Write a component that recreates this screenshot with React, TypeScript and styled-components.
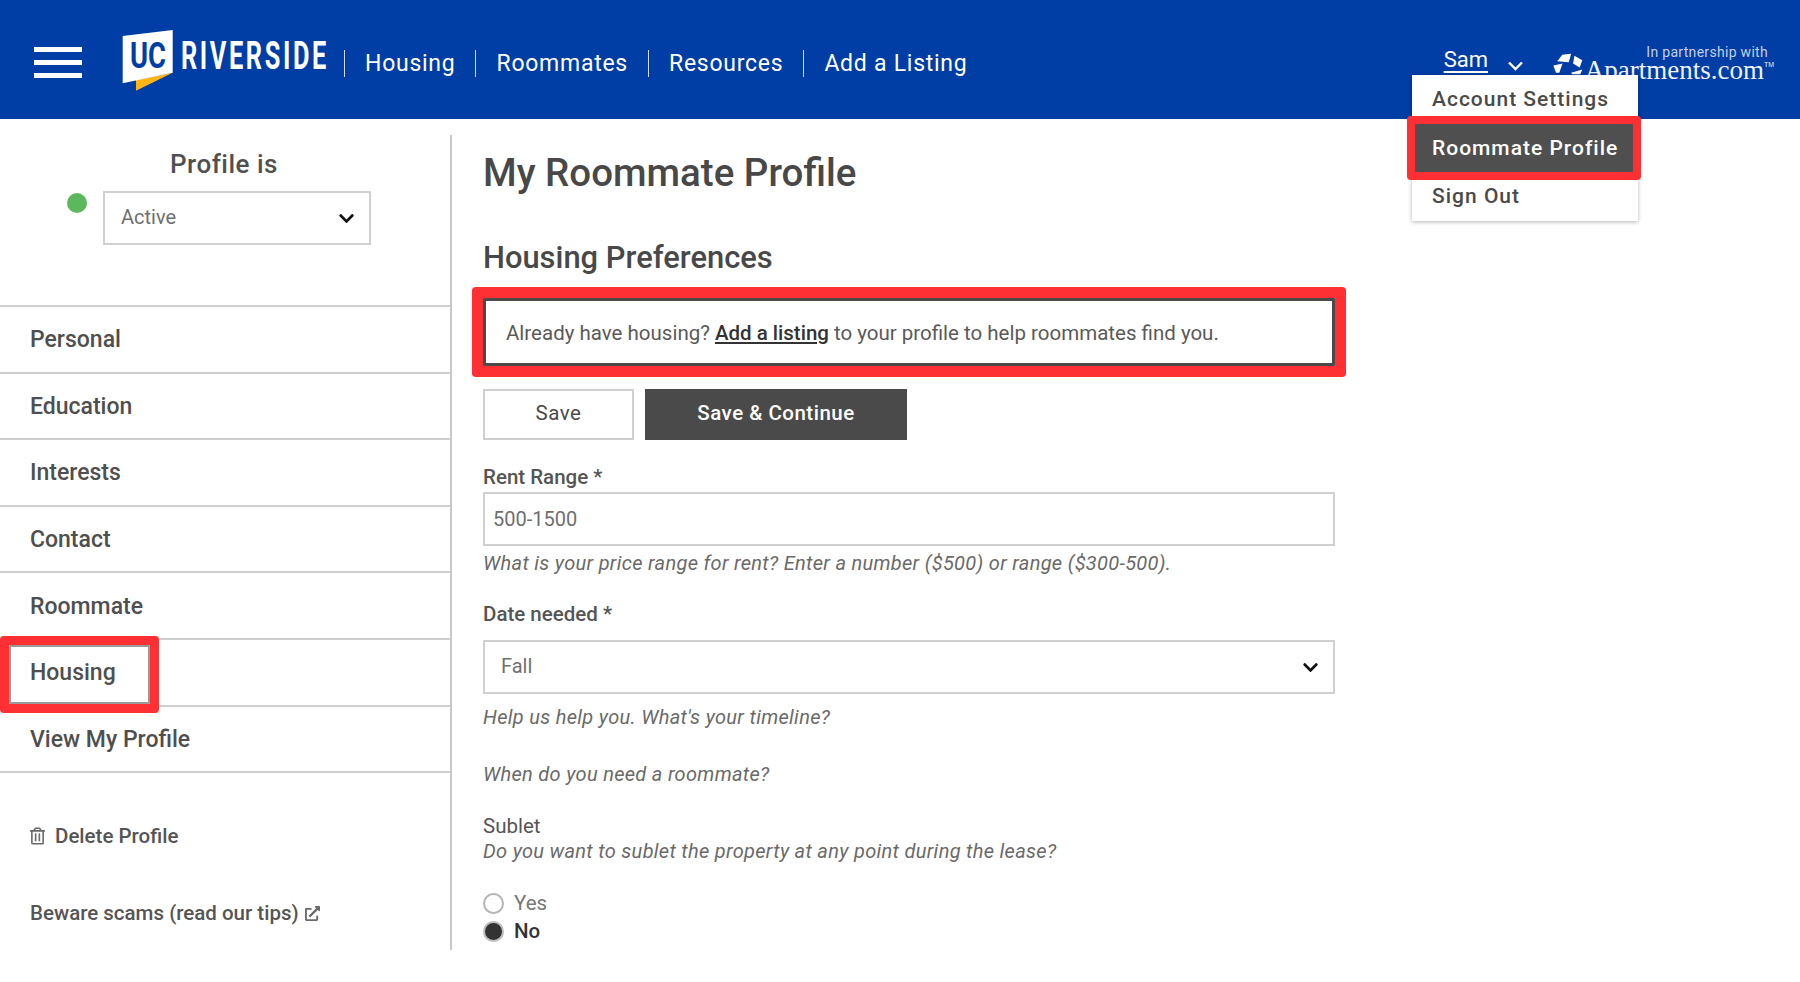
import React from "react";
import styled, { createGlobalStyle } from "styled-components";
import { FaChevronDown, FaRegTrashAlt, FaExternalLinkAlt } from "react-icons/fa";

const navLinks = ["Housing", "Roommates", "Resources", "Add a Listing"];
const sideLinks = ["Personal", "Education", "Interests", "Contact", "Roommate", "Housing", "View My Profile"];

const GlobalStyle = createGlobalStyle`
  html, body {
    margin: 0;
    padding: 0;
    background: #fff;
    font-family: Roboto, "Liberation Sans", sans-serif;
    color: #4a4a4a;
    overflow: hidden;
  }
  * { box-sizing: border-box; }
`;

const Page = styled.div`
  width: 1800px;
  height: 982px;
  overflow: hidden;
`;

const Header = styled.header`
  position: relative;
  height: 119px;
  background: #003da5;
  display: flex;
  align-items: center;
  padding-left: 34px;
  color: #fff;
`;

const Burger = styled.div`
  width: 48px;
  display: flex;
  flex-direction: column;
  gap: 8px;
  margin-top: 6px;

  span {
    height: 5px;
    background: #fff;
  }
`;

const LogoWrap = styled.div`
  width: 222px;
  height: 62px;
  margin-left: 40px;
  margin-top: 3px;
`;

const TopNav = styled.nav`
  display: flex;
  align-items: center;
  margin-top: 7px;
`;

const TopLink = styled.a`
  font-size: 23px;
  letter-spacing: 0.74px;
  line-height: 27px;
  padding: 0 20px;
  border-left: 1px solid #cfd8ea;
  color: #fff;
`;

const Account = styled.div`
  margin-left: auto;
  align-self: stretch;
  display: flex;
  align-items: flex-start;
  margin-right: 26px;
`;

const UserName = styled.a`
  font-size: 22px;
  line-height: 26px;
  text-decoration: underline;
  text-underline-offset: 4px;
  color: #fff;
  margin-top: 47px;
  margin-right: 20px;
`;

const Caret = styled.svg`
  margin-top: 61px;
  margin-right: 29px;
`;

const ApartmentsWrap = styled.div`
  margin-top: 47px;
  width: 222px;
  display: flex;
  flex-direction: column;
  align-items: flex-end;
  position: relative;
`;

const Partner = styled.div`
  font-size: 14px;
  letter-spacing: 0.3px;
  color: #c3cfe8;
  line-height: 10px;
  margin-right: 6px;
`;

const ApartmentsName = styled.div`
  font-family: "Liberation Serif", serif;
  font-size: 27px;
  line-height: 14px;
  margin-top: 6px;
  color: #eef2f9;

  sup {
    font-size: 7px;
    line-height: 0;
    vertical-align: 12px;
    font-family: "Liberation Sans", sans-serif;
  }
`;

const StarLogo = styled.svg`
  position: absolute;
  left: 0;
  top: 6px;
`;

const Menu = styled.div`
  position: absolute;
  left: 1412px;
  top: 75px;
  width: 226px;
  background: #fff;
  box-shadow: 0 1px 4px rgba(0, 0, 0, 0.3);
  z-index: 5;
`;

const MenuItem = styled.div<{ $active?: boolean }>`
  position: relative;
  height: ${(p) => (p.$active ? 48 : 49)}px;
  display: flex;
  align-items: center;
  padding-left: 20px;
  padding-bottom: 1px;
  font-size: 21px;
  font-weight: 500;
  letter-spacing: 1px;
  color: ${(p) => (p.$active ? "#fff" : "#4a4a4a")};
  background: ${(p) => (p.$active ? "#4f4f4f" : "#fff")};
  ${(p) => p.$active && "z-index: 1; margin: 0 5px 0 3px; padding-left: 17px; box-shadow: 0 0 0 8px #ff3034; border-radius: 1px;"}
`;

const Body = styled.div`
  display: flex;
  padding-top: 16px;
`;

const Sidebar = styled.aside`
  width: 452px;
  height: 815px;
  border-right: 2px solid #c8c8c8;
  flex-shrink: 0;
`;

const StatusBlock = styled.div`
  height: 170px;
  display: flex;
  flex-direction: column;
  align-items: center;
  padding-top: 11px;
`;

const StatusTitle = styled.div`
  font-size: 26px;
  font-weight: 500;
  line-height: 36px;
  letter-spacing: 0.5px;
  margin-right: 2px;
  color: #505050;
`;

const StatusRow = styled.div`
  display: flex;
  width: 100%;
  padding-left: 67px;
  margin-top: 9px;
`;

const Dot = styled.span`
  width: 20px;
  height: 20px;
  border-radius: 50%;
  background: #5cb85c;
  margin-top: 2px;
  margin-right: 16px;
`;

const SelectBox = styled.div<{ $width: string; $height: number; $pad: number; $top?: number }>`
  width: ${(p) => p.$width};
  height: ${(p) => p.$height}px;
  margin-top: ${(p) => p.$top ?? 0}px;
  border: 2px solid #d0d0d0;
  display: flex;
  align-items: center;
  justify-content: space-between;
  padding: 0 14px 2px ${(p) => p.$pad}px;
  font-size: 20px;
  color: #6f6f6f;
  background: #fff;

  svg {
    margin-top: 2px;
  }
`;

const SideList = styled.ul`
  list-style: none;
  margin: 0;
  padding: 0;
  border-top: 2px solid #cfcfcf;
`;

const SideItem = styled.li`
  position: relative;
  height: 66.6px;
  border-bottom: 2px solid #cfcfcf;
  display: flex;
  align-items: center;
  padding: 1px 0 0 30px;
  font-size: 23px;
  font-weight: 500;
  color: #4f4f4f;
`;

const SideMark = styled.span`
  position: absolute;
  left: 9px;
  top: 5px;
  width: 141px;
  height: 59px;
  border: 2px solid #9a9a9a;
  box-shadow: 0 0 0 9px #ff3034;
  border-radius: 1px;
`;

const SideFoot = styled.div`
  padding-left: 30px;
  font-size: 20.5px;
  font-weight: 500;
  color: #555;
  display: flex;
  flex-direction: column;
  gap: 53px;
  padding-top: 51px;
`;

const FootLink = styled.div`
  display: flex;
  align-items: center;
  line-height: 24px;

  svg {
    color: #6a6a6a;
  }
`;

const TrashIcon = styled(FaRegTrashAlt)`
  margin-right: 10px;
  width: 15px;
  height: 18px;
`;

const OutIcon = styled(FaExternalLinkAlt)`
  margin-left: 6px;
`;

const Main = styled.main`
  width: 852px;
  margin-left: 31px;
  display: flex;
  flex-direction: column;
`;

const Title = styled.h1`
  margin: 16px 0 0;
  font-size: 38.5px;
  line-height: 44px;
  font-weight: 500;
  color: #484848;
`;

const Subtitle = styled.h2`
  margin: 44px 0 0;
  font-size: 30.9px;
  line-height: 38px;
  font-weight: 500;
  color: #484848;
`;

const Callout = styled.div`
  margin-top: 21px;
  height: 68px;
  border: 3px solid #4a4a4a;
  box-shadow: 0 0 0 11px #ff3034;
  border-radius: 1px;
  display: flex;
  align-items: center;
  padding: 2px 0 0 20px;
  font-size: 20.5px;
  color: #5a5a5a;

  a {
    margin: 0 5px;
    font-weight: 500;
    color: #333;
    text-decoration: underline;
    text-underline-offset: 2px;
  }
`;

const Buttons = styled.div`
  display: flex;
  gap: 11px;
  margin-top: 23px;
`;

const Button = styled.button<{ $primary?: boolean }>`
  height: 51px;
  width: ${(p) => (p.$primary ? 262 : 151)}px;
  font-family: inherit;
  font-size: 20.5px;
  font-weight: ${(p) => (p.$primary ? 500 : 400)};
  letter-spacing: 0.5px;
  border: ${(p) => (p.$primary ? "none" : "2px solid #cfcfcf")};
  background: ${(p) => (p.$primary ? "#4a4a4a" : "#fff")};
  color: ${(p) => (p.$primary ? "#fff" : "#4a4a4a")};
  border-radius: 0;
  padding: 0 0 3px;
`;

const Label = styled.div<{ $top: number; $plain?: boolean }>`
  margin-top: ${(p) => p.$top}px;
  font-size: 20.5px;
  line-height: 26px;
  font-weight: ${(p) => (p.$plain ? 400 : 500)};
  color: #555;
`;

const TextField = styled.div`
  margin-top: 2px;
  height: 54px;
  border: 2px solid #d0d0d0;
  display: flex;
  align-items: center;
  padding-left: 8px;
  font-size: 20px;
  color: #6f6f6f;
`;

const Help = styled.div<{ $top: number }>`
  margin-top: ${(p) => p.$top}px;
  font-size: 20px;
  line-height: 26px;
  font-style: italic;
  letter-spacing: 0.31px;
  color: #6a6a6a;
`;

const RadioRow = styled.div<{ $top: number; $on?: boolean }>`
  margin-top: ${(p) => p.$top}px;
  display: flex;
  align-items: center;
  gap: 10px;
  height: 24px;
  font-size: 20.5px;
  font-weight: ${(p) => (p.$on ? 500 : 400)};
  color: ${(p) => (p.$on ? "#333" : "#777")};
`;

const Radio = styled.span<{ $on?: boolean }>`
  width: 21px;
  height: 21px;
  border-radius: 50%;
  border: 2px solid ${(p) => (p.$on ? "#bdbdbd" : "#b5b5b5")};
  background: ${(p) => (p.$on ? "#333" : "#fff")};
`;

const UcrLogo = () => (
  <svg width="222" height="62" viewBox="0 0 222 62">
    <polygon points="14,50 50.7,42.7 14,60.7" fill="#fdb515" />
    <polygon points="0.7,6 50.7,0 50.7,42.7 0.7,53.3" fill="#fff" />
    <g transform="translate(8 38.3) scale(0.74 1)">
      <text fontFamily="Roboto" fontWeight="700" fontSize="37" fill="#003da5">
        UC
      </text>
    </g>
    <g transform="translate(59 39.3) scale(0.65 1)">
      <text fontFamily="Roboto" fontWeight="700" fontSize="39" letterSpacing="4" fill="#fff">
        RIVERSIDE
      </text>
    </g>
  </svg>
);

const App: React.FC = () => {
  return (
    <Page>
      <GlobalStyle />
      <Header>
        <Burger>
          <span />
          <span />
          <span />
        </Burger>
        <LogoWrap>
          <UcrLogo />
        </LogoWrap>
        <TopNav>
          {navLinks.map((l) => (
            <TopLink key={l}>{l}</TopLink>
          ))}
        </TopNav>
        <Account>
          <UserName>Sam</UserName>
          <Caret width="15" height="10" viewBox="0 0 15 10">
            <polyline points="1,1.5 7.5,8 14,1.5" fill="none" stroke="#fff" strokeWidth="2.4" />
          </Caret>
          <ApartmentsWrap>
            <StarLogo width="32" height="23" viewBox="155 40 95 70">
              <polygon points="170,65 185,45 212,42 205,68" fill="#fff" />
              <polygon points="222,48 246,62 238,84 218,72" fill="#fff" />
              <polygon points="158,78 186,72 176,100 166,100" fill="#fff" />
              <polygon points="212,100 246,90 240,105 215,105" fill="#fff" />
            </StarLogo>
            <Partner>In partnership with</Partner>
            <ApartmentsName>
              Apartments.com<sup>TM</sup>
            </ApartmentsName>
          </ApartmentsWrap>
        </Account>
        <Menu>
          <MenuItem>Account Settings</MenuItem>
          <MenuItem $active>Roommate Profile</MenuItem>
          <MenuItem>Sign Out</MenuItem>
        </Menu>
      </Header>
      <Body>
        <Sidebar>
          <StatusBlock>
            <StatusTitle>Profile is</StatusTitle>
            <StatusRow>
              <Dot />
              <SelectBox $width="268px" $height={54} $pad={16}>
                Active
                <FaChevronDown size={17} color="#111" />
              </SelectBox>
            </StatusRow>
          </StatusBlock>
          <SideList>
            {sideLinks.map((l) => (
              <SideItem key={l}>
                {l === "Housing" && <SideMark />}
                {l}
              </SideItem>
            ))}
          </SideList>
          <SideFoot>
            <FootLink>
              <TrashIcon />
              Delete Profile
            </FootLink>
            <FootLink>
              Beware scams (read our tips)
              <OutIcon size={15} />
            </FootLink>
          </SideFoot>
        </Sidebar>
        <Main>
          <Title>My Roommate Profile</Title>
          <Subtitle>Housing Preferences</Subtitle>
          <Callout>
            Already have housing? <a>Add a listing</a> to your profile to help roommates find you.
          </Callout>
          <Buttons>
            <Button>Save</Button>
            <Button $primary>Save &amp; Continue</Button>
          </Buttons>
          <Label $top={24}>Rent Range *</Label>
          <TextField>500-1500</TextField>
          <Help $top={4}>What is your price range for rent? Enter a number ($500) or range ($300-500).</Help>
          <Label $top={25}>Date needed *</Label>
          <SelectBox $width="100%" $height={54} $pad={16} $top={13}>
            Fall
            <FaChevronDown size={17} color="#111" />
          </SelectBox>
          <Help $top={10}>Help us help you. What's your timeline?</Help>
          <Help $top={31}>When do you need a roommate?</Help>
          <Label $top={26} $plain>
            Sublet
          </Label>
          <Help $top={-1}>Do you want to sublet the property at any point during the lease?</Help>
          <RadioRow $top={27}>
            <Radio />
            Yes
          </RadioRow>
          <RadioRow $top={4} $on>
            <Radio $on />
            No
          </RadioRow>
        </Main>
      </Body>
    </Page>
  );
};

export default App;
